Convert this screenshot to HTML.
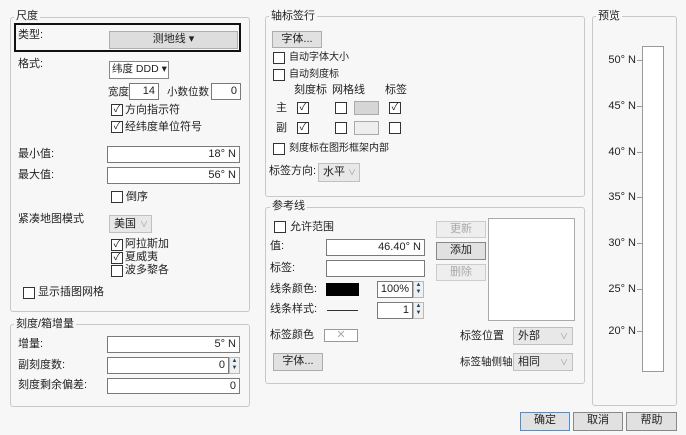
<!DOCTYPE html><html><head><style>
body{margin:0;width:686px;height:435px;background:#f7f7f7;font-family:"Liberation Sans","Noto Sans CJK SC",sans-serif;font-size:11px;color:#222;position:relative;overflow:hidden}
div,span{position:absolute;box-sizing:border-box;white-space:nowrap}
.g{border:1px solid #c8c8c8;border-radius:3px}
.gl{background:#f7f7f7;padding:0 2px;line-height:12px}
.t{line-height:12px}
.in{background:#fff;border:1px solid #7a7a7a;text-align:right;padding-right:3px;line-height:15px}
.bt{background:#e1e1e1;border:1px solid #adadad;text-align:center;line-height:15px}
.cb{width:12px;height:12px;border:1px solid #333;background:#fff;font-size:10px;line-height:10px;text-align:center}
.sel{background:#e8e8e8;border:1px solid #c0c0c0;padding-left:4px;line-height:17px}
.sp{background:#f0f0f0;border:1px solid #b8b8b8;font-size:6px;line-height:7px;text-align:center;color:#246;white-space:normal}
.pl{width:50px;text-align:right;left:586px;line-height:12px}
.tk{left:637px;width:5px;height:1px;background:#999}
.ar{color:#999;font-size:8px}
</style></head><body>
<div class="g" style="left:10px;top:17px;width:240px;height:295px"></div>
<div class="gl" style="left:14px;top:10px">尺度</div>
<div style="left:14px;top:23px;width:227px;height:29px;border:2px solid #111"></div>
<div class="t" style="left:18px;top:29px">类型:</div>
<div class="bt" style="left:109px;top:31px;width:129px;height:18px;background:#ddd">测地线 ▾</div>
<div class="t" style="left:18px;top:58px">格式:</div>
<div class="sel" style="left:109px;top:61px;width:60px;height:18px;background:#fff;border-color:#888;line-height:15px;padding-left:2px;font-size:10.5px">纬度 DDD ▾</div>
<div class="t" style="left:108px;top:86px;font-size:10.5px">宽度</div>
<div class="in" style="left:129px;top:83px;width:30px;height:17px">14</div>
<div class="t" style="left:167px;top:86px;font-size:10.5px">小数位数</div>
<div class="in" style="left:211px;top:83px;width:30px;height:17px">0</div>
<div class="cb" style="left:111px;top:104px">✓</div><div class="t" style="left:125px;top:104px">方向指示符</div>
<div class="cb" style="left:111px;top:121px">✓</div><div class="t" style="left:125px;top:121px">经纬度单位符号</div>
<div class="t" style="left:18px;top:148px">最小值:</div>
<div class="in" style="left:107px;top:146px;width:133px;height:17px">18° N</div>
<div class="t" style="left:18px;top:169px">最大值:</div>
<div class="in" style="left:107px;top:167px;width:133px;height:17px">56° N</div>
<div class="cb" style="left:111px;top:191px"></div><div class="t" style="left:126px;top:191px">倒序</div>
<div class="t" style="left:18px;top:213px">紧凑地图模式</div>
<div class="sel" style="left:109px;top:215px;width:43px;height:18px">美国<span class="ar" style="left:30px;top:0">∨</span></div>
<div class="cb" style="left:111px;top:239px">✓</div><div class="t" style="left:125px;top:238px">阿拉斯加</div>
<div class="cb" style="left:111px;top:252px">✓</div><div class="t" style="left:125px;top:251px">夏威夷</div>
<div class="cb" style="left:111px;top:265px"></div><div class="t" style="left:125px;top:264px">波多黎各</div>
<div class="cb" style="left:23px;top:287px"></div><div class="t" style="left:38px;top:286px">显示插图网格</div>

<div class="g" style="left:10px;top:324px;width:240px;height:83px"></div>
<div class="gl" style="left:14px;top:318px">刻度/箱增量</div>
<div class="t" style="left:18px;top:338px">增量:</div>
<div class="in" style="left:107px;top:336px;width:133px;height:17px">5° N</div>
<div class="t" style="left:18px;top:359px">副刻度数:</div>
<div class="in" style="left:107px;top:357px;width:122px;height:17px">0</div>
<div class="sp" style="left:229px;top:357px;width:11px;height:17px">▲<br>▼</div>
<div class="t" style="left:18px;top:379px">刻度剩余偏差:</div>
<div class="in" style="left:107px;top:378px;width:133px;height:16px">0</div>

<div class="g" style="left:265px;top:16px;width:320px;height:181px"></div>
<div class="gl" style="left:269px;top:10px">轴标签行</div>
<div class="bt" style="left:272px;top:31px;width:50px;height:17px">字体...</div>
<div class="cb" style="left:273px;top:52px"></div><div class="t" style="left:289px;top:52px;font-size:10px">自动字体大小</div>
<div class="cb" style="left:273px;top:69px"></div><div class="t" style="left:289px;top:69px;font-size:10px">自动刻度标</div>
<div class="t" style="left:294px;top:84px">刻度标</div><div class="t" style="left:332px;top:84px">网格线</div><div class="t" style="left:385px;top:84px">标签</div>
<div class="t" style="left:276px;top:102px">主</div>
<div class="cb" style="left:297px;top:102px">✓</div><div class="cb" style="left:335px;top:102px"></div>
<div style="left:354px;top:101px;width:25px;height:14px;background:#d6d6d6;border:1px solid #aaa"></div>
<div class="cb" style="left:389px;top:102px">✓</div>
<div class="t" style="left:276px;top:122px">副</div>
<div class="cb" style="left:297px;top:122px">✓</div><div class="cb" style="left:335px;top:122px"></div>
<div style="left:354px;top:121px;width:25px;height:14px;background:#eee;border:1px solid #aaa"></div>
<div class="cb" style="left:389px;top:122px"></div>
<div class="cb" style="left:273px;top:143px"></div><div class="t" style="left:289px;top:143px;font-size:10px">刻度标在图形框架内部</div>
<div class="t" style="left:269px;top:165px">标签方向:</div>
<div class="sel" style="left:318px;top:163px;width:42px;height:19px">水平<span class="ar" style="left:29px;top:0">∨</span></div>

<div class="g" style="left:265px;top:207px;width:320px;height:177px"></div>
<div class="gl" style="left:270px;top:200px">参考线</div>
<div class="cb" style="left:274px;top:221px"></div><div class="t" style="left:290px;top:221px">允许范围</div>
<div class="t" style="left:270px;top:240px">值:</div>
<div class="in" style="left:326px;top:239px;width:99px;height:17px">46.40° N</div>
<div class="t" style="left:270px;top:262px">标签:</div>
<div class="in" style="left:326px;top:260px;width:99px;height:17px"></div>
<div class="t" style="left:270px;top:283px">线条颜色:</div>
<div style="left:326px;top:283px;width:33px;height:13px;background:#000"></div>
<div class="in" style="left:377px;top:281px;width:36px;height:17px">100%</div>
<div class="sp" style="left:413px;top:281px;width:11px;height:17px">▲<br>▼</div>
<div class="t" style="left:270px;top:303px">线条样式:</div>
<div style="left:327px;top:310px;width:31px;height:1px;background:#333"></div>
<div class="in" style="left:377px;top:302px;width:36px;height:17px">1</div>
<div class="sp" style="left:413px;top:302px;width:11px;height:17px">▲<br>▼</div>
<div class="t" style="left:270px;top:329px">标签颜色</div>
<div style="left:324px;top:329px;width:34px;height:13px;border:1px solid #999;background:#fff;color:#aaa;text-align:center;line-height:10px;font-size:11px">✕</div>
<div class="bt" style="left:273px;top:353px;width:50px;height:18px">字体...</div>
<div class="bt" style="left:436px;top:221px;width:50px;height:17px;color:#aaa;background:#eee;border-color:#ccc">更新</div>
<div class="bt" style="left:436px;top:242px;width:50px;height:18px;border-color:#888">添加</div>
<div class="bt" style="left:436px;top:264px;width:50px;height:17px;color:#aaa;background:#eee;border-color:#ccc">删除</div>
<div style="left:488px;top:218px;width:87px;height:103px;background:#fff;border:1px solid #aaa"></div>
<div class="t" style="left:460px;top:330px">标签位置</div>
<div class="sel" style="left:513px;top:327px;width:60px;height:18px">外部<span class="ar" style="left:46px;top:0">∨</span></div>
<div class="t" style="left:460px;top:356px;font-size:10.5px">标签轴侧轴</div>
<div class="sel" style="left:513px;top:353px;width:60px;height:18px">相同<span class="ar" style="left:46px;top:0">∨</span></div>

<div class="g" style="left:592px;top:16px;width:85px;height:390px"></div>
<div class="gl" style="left:596px;top:10px">预览</div>
<div style="left:642px;top:46px;width:22px;height:326px;background:#fff;border:1px solid #999"></div>
<div class="pl" style="top:54px">50° N</div><div class="tk" style="top:60px"></div>
<div class="pl" style="top:100px">45° N</div><div class="tk" style="top:106px"></div>
<div class="pl" style="top:146px">40° N</div><div class="tk" style="top:152px"></div>
<div class="pl" style="top:191px">35° N</div><div class="tk" style="top:197px"></div>
<div class="pl" style="top:237px">30° N</div><div class="tk" style="top:243px"></div>
<div class="pl" style="top:283px">25° N</div><div class="tk" style="top:289px"></div>
<div class="pl" style="top:325px">20° N</div><div class="tk" style="top:331px"></div>

<div class="bt" style="left:520px;top:412px;width:50px;height:19px;border-color:#4a90d9">确定</div>
<div class="bt" style="left:573px;top:412px;width:50px;height:19px;border-color:#888">取消</div>
<div class="bt" style="left:626px;top:412px;width:51px;height:19px;border-color:#888">帮助</div>
</body></html>
